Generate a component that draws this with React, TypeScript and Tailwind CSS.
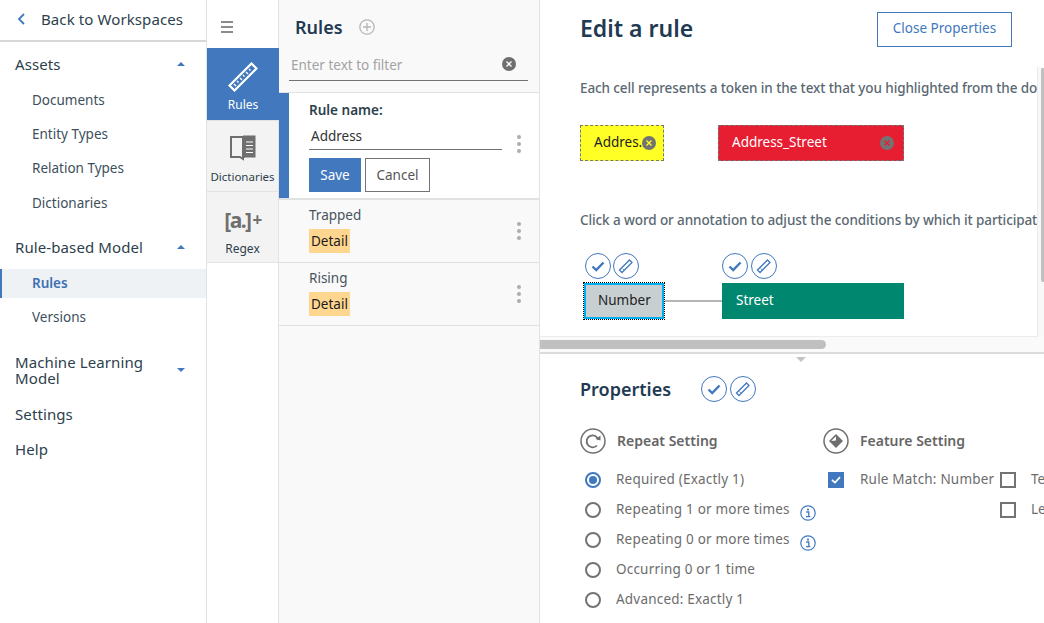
import React from "react";

const BLUE = "#4178be";

function Caret({ up = true }: { up?: boolean }) {
  return (
    <svg width="8" height="4" viewBox="0 0 8 4" className="shrink-0">
      <path d={up ? "M0 4 L4 0 L8 4 Z" : "M0 0 L4 4 L8 0 Z"} fill={BLUE} />
    </svg>
  );
}

function NavHead({ children, up = true }: { children: React.ReactNode; up?: boolean }) {
  return (
    <div className="flex items-center justify-between pl-[15px] pr-[21px] text-[15px] leading-[16px] text-[#2d3f4d] tracking-[0.1px]">
      <span>{children}</span>
      <Caret up={up} />
    </div>
  );
}

function NavItem({ children, active }: { children: React.ReactNode; active?: boolean }) {
  return (
    <div
      className={
        "h-[29px] flex items-center text-[13.5px] " +
        (active
          ? "bg-[#eff2f5] border-l-2 border-[#4178be] pl-[30px] text-[#3d70b2] font-semibold"
          : "pl-[32px] text-[#3d4f5c]")
      }
    >
      {children}
    </div>
  );
}

function CircleBtn({ kind }: { kind: "check" | "ruler" }) {
  return (
    <div className="w-[26px] h-[26px] rounded-full border border-[#4178be] bg-white flex items-center justify-center shrink-0">
      {kind === "check" ? (
        <svg width="14" height="11" viewBox="0 0 14 11" fill="none">
          <path d="M1.5 5.5 L5.2 9 L12.5 1.5" stroke={BLUE} strokeWidth="2.4" />
        </svg>
      ) : (
        <svg width="16" height="16" viewBox="0 0 16 16" fill="none">
          <path d="M1.5 12 L11.5 2 L14 4.5 L4 14.5 Z" stroke={BLUE} strokeWidth="1.3" />
          <path d="M4.5 10.5 L6 12" stroke={BLUE} strokeWidth="0.8" />
        </svg>
      )}
    </div>
  );
}

function CloseDot({ bg = "#6f6f6f", fg = "#fff", size = 14 }: { bg?: string; fg?: string; size?: number }) {
  return (
    <svg width={size} height={size} viewBox="0 0 14 14" className="shrink-0">
      <circle cx="7" cy="7" r="7" fill={bg} />
      <path d="M4.5 4.5 L9.5 9.5 M9.5 4.5 L4.5 9.5" stroke={fg} strokeWidth="1.3" />
    </svg>
  );
}

function Dots() {
  return (
    <div className="flex flex-col gap-[3px] shrink-0">
      <span className="w-[4px] h-[4px] rounded-full bg-[#a8adb1]" />
      <span className="w-[4px] h-[4px] rounded-full bg-[#a8adb1]" />
      <span className="w-[4px] h-[4px] rounded-full bg-[#a8adb1]" />
    </div>
  );
}

function RuleRow({ name }: { name: string }) {
  return (
    <div className="h-[63px] border-b border-[#dfe1e2] flex items-center justify-between pl-[30px] pr-[18px]">
      <div className="mb-[2px]">
        <div className="text-[13.5px] leading-[16px] text-[#47535c] mt-[-1px]">{name}</div>
        <div className="mt-[6px] w-[41px] h-[24px] bg-[#ffd68f] text-[13.5px] leading-[24px] text-[#1c1c1c] pl-[2px]">Detail</div>
      </div>
      <Dots />
    </div>
  );
}

function Radio({ label, on, info }: { label: string; on?: boolean; info?: boolean }) {
  return (
    <div className="h-[30px] flex items-center">
      <span
        className={
          "ml-[5px] w-[16px] h-[16px] rounded-full border-2 flex items-center justify-center shrink-0 " +
          (on ? "border-[#4178be]" : "border-[#737373]")
        }
      >
        {on && <span className="w-[8px] h-[8px] rounded-full bg-[#4178be]" />}
      </span>
      <span className="ml-[15px] mb-[2px] text-[13.5px] text-[#6c6c6c] tracking-[0.2px] whitespace-nowrap">{label}</span>
      {info && (
        <svg width="16" height="16" viewBox="0 0 16 16" className="ml-[10px] mt-[5px] shrink-0" fill="none">
          <circle cx="8" cy="8" r="7.2" stroke={BLUE} strokeWidth="1.2" />
          <circle cx="8" cy="4.6" r="1.1" fill={BLUE} />
          <path d="M6.2 7 H8.8 V11.4 M6 11.6 H10.4" stroke={BLUE} strokeWidth="1.3" />
        </svg>
      )}
    </div>
  );
}

function Box({ checked }: { checked?: boolean }) {
  return checked ? (
    <span className="w-[16px] h-[16px] bg-[#4178be] flex items-center justify-center shrink-0">
      <svg width="10" height="8" viewBox="0 0 10 8" fill="none">
        <path d="M1 4 L4 6.6 L9 1.2" stroke="#fff" strokeWidth="1.7" />
      </svg>
    </span>
  ) : (
    <span className="w-[16px] h-[16px] border-2 border-[#737373] bg-white shrink-0" />
  );
}

export default function App() {
  return (
    <div
      className="w-[1044px] h-[623px] overflow-hidden flex bg-white text-[#2d3f4d]"
      style={{ fontFamily: '"Noto Sans", "Open Sans", sans-serif' }}
    >
      {/* Left navigation */}
      <nav className="w-[207px] shrink-0 border-r border-[#dfe3e6] flex flex-col">
        <div className="h-[42px] border-b-2 border-[#d5d7d9] flex items-center pl-[17px] pb-[2px] shrink-0">
          <svg width="9" height="12" viewBox="0 0 9 12" fill="none">
            <path d="M7 1 L2 6 L7 11" stroke={BLUE} strokeWidth="1.8" />
          </svg>
          <span className="ml-[15px] text-[15px] text-[#2d3f4d] tracking-[0.1px]">Back to Workspaces</span>
        </div>
        <div className="pt-[14px]">
          <NavHead>Assets</NavHead>
          <div className="mt-[14px]">
            <div className="mb-[5px]"><NavItem>Documents</NavItem></div>
            <div className="mb-[5px]"><NavItem>Entity Types</NavItem></div>
            <div className="mb-[6px]"><NavItem>Relation Types</NavItem></div>
            <NavItem>Dictionaries</NavItem>
          </div>
          <div className="mt-[21px]"><NavHead>Rule-based Model</NavHead></div>
          <div className="mt-[14px]">
            <NavItem active>Rules</NavItem>
            <div className="mt-[5px]"><NavItem>Versions</NavItem></div>
          </div>
          <div className="mt-[22px]">
            <NavHead up={false}>
              <span className="block w-[150px]">Machine Learning Model</span>
            </NavHead>
          </div>
          <div className="mt-[20px] pl-[15px] text-[15px] leading-[16px] tracking-[0.1px]">Settings</div>
          <div className="mt-[19px] pl-[15px] text-[15px] leading-[16px] tracking-[0.1px]">Help</div>
        </div>
      </nav>

      {/* Icon rail */}
      <div className="w-[72px] shrink-0 flex flex-col border-r border-[#dfe3e6]">
        <div className="h-[48px] flex items-center pl-[14px] pt-[6px] shrink-0">
          <div className="flex flex-col gap-[3px]">
            <span className="w-[12px] h-[2px] bg-[#8c8c8c]" />
            <span className="w-[12px] h-[2px] bg-[#8c8c8c]" />
            <span className="w-[12px] h-[2px] bg-[#8c8c8c]" />
          </div>
        </div>
        <div className="h-[72px] bg-[#4178be] text-white flex flex-col items-center pt-[14px] w-[72px]">
          <svg width="30" height="30" viewBox="0 0 30 30" fill="none">
            <path d="M1.5 23.5 L23.5 1.5 L28.5 6.5 L6.5 28.5 Z" fill="#4178be" stroke="#fff" strokeWidth="2.2" />
            <path d="M6 22 l2 2 M9 19 l1.5 1.5 M12 16 l2 2 M15 13 l1.5 1.5 M18 10 l2 2 M21 7 l1.5 1.5" stroke="#fff" strokeWidth="1.4" />
          </svg>
          <span className="mt-[5px] text-[12px] leading-[16px]">Rules</span>
        </div>
        <div className="h-[72px] bg-[#f3f3f3] border-y border-[#e3e3e3] flex flex-col items-center pt-[13px] overflow-hidden">
          <svg width="27" height="27" viewBox="0 0 27 27" fill="none">
            <path d="M13 3 H2 V23 H11 L14 25 V3 Z" fill="#f3f3f3" stroke="#6f6f6f" strokeWidth="2" />
            <path d="M14 1.5 H26.5 V23.5 H16 L14 25 Z" fill="#6f6f6f" />
            <path d="M17 8 H24 M17 11.5 H24 M17 15 H24 M17 18.5 H24" stroke="#fff" strokeWidth="1.1" />
          </svg>
          <span className="mt-[8px] text-[11.5px] leading-[16px] text-[#2d3f4d] whitespace-nowrap">Dictionaries</span>
        </div>
        <div className="h-[71px] bg-[#f3f3f3] border-b border-[#e3e3e3] flex flex-col items-center pt-[15px] overflow-hidden">
          <div className="h-[26px] flex items-center text-[#6f6f6f] font-bold text-[21px] leading-[24px] tracking-[-1.5px]">
            [a.]<span className="text-[17px] ml-[2px]">+</span>
          </div>
          <span className="mt-[8px] text-[12px] leading-[16px] text-[#2d3f4d]">Regex</span>
        </div>
      </div>

      {/* Rules panel */}
      <div className="w-[261px] shrink-0 bg-[#f9f9f9] border-r border-[#dfe3e6] flex flex-col">
        <div className="h-[44px] pt-[11px] pl-[16px] flex items-center shrink-0">
          <span className="text-[18px] font-semibold text-[#1f3a52]">Rules</span>
          <svg width="16" height="16" viewBox="0 0 16 16" fill="none" className="ml-[16px] mt-[-2px]">
            <circle cx="8" cy="8" r="7.2" stroke="#b5b5b5" strokeWidth="1.3" />
            <path d="M8 4 V12 M4 8 H12" stroke="#b5b5b5" strokeWidth="1.3" />
          </svg>
        </div>
        <div className="ml-[10px] mr-[11px] h-[38px] border-b border-[#737373] flex items-center justify-between pl-[2px] pr-[12px] pt-[6px] mt-[-1px]">
          <span className="mt-[2px] text-[13.5px] text-[#a3a3a3]">Enter text to filter</span>
          <span className="mb-[1px]"><CloseDot /></span>
        </div>
        <div className="mt-[11px] h-[108px] border-t border-b-2 border-[#dfe1e2] bg-white flex">
          <div className="w-[10px] bg-[#4178be] shrink-0" />
          <div className="flex-1 pl-[20px] pr-[18px] pt-[9px] flex items-start justify-between">
            <div className="w-[193px]">
              <div className="text-[13.5px] leading-[16px] font-semibold text-[#2d3f4d]">Rule name:</div>
              <div className="mt-[2px] h-[30px] border-b border-[#737373] flex items-center pl-[2px] pt-[3px] text-[13.5px] text-[#333]">Address</div>
              <div className="mt-[8px] flex gap-[4px]">
                <div className="w-[52px] h-[34px] bg-[#4178be] text-white text-[13.5px] flex items-center justify-center">Save</div>
                <div className="w-[65px] h-[34px] border border-[#737373] bg-white text-[13.5px] text-[#555] flex items-center justify-center">Cancel</div>
              </div>
            </div>
            <div className="mt-[33px]"><Dots /></div>
          </div>
        </div>
        <RuleRow name="Trapped" />
        <RuleRow name="Rising" />
      </div>

      {/* Main */}
      <div className="flex-1 min-w-0 flex flex-col overflow-hidden">
        <div className="h-[354px] shrink-0 border-b-2 border-[#dcdcdc] flex flex-col">
          <div className="h-[67px] shrink-0 pl-[40px] pt-[12px] flex items-start">
            <h1 className="w-[297px] text-[23px] leading-[32px] font-semibold text-[#1f3a52]">Edit a rule</h1>
            <div className="w-[135px] h-[35px] border border-[#4178be] text-[#4178be] text-[13.5px] flex items-center justify-center pb-[2px]">Close Properties</div>
          </div>
          <div className="h-[270px] shrink-0 flex">
            <div className="flex-1 min-w-0 pl-[40px] pt-[11px] border-r border-b border-[#ececec] overflow-hidden">
              <div className="w-[600px]">
                <p className="text-[13.5px] leading-[20px] font-medium text-[#5a6872] tracking-[-0.1px] whitespace-nowrap">Each cell represents a token in the text that you highlighted from the document.</p>
                <div className="mt-[27px] flex">
                  <div className="w-[84px] h-[36px] bg-[#ffff26] border border-dashed border-[#777] flex items-center pl-[13px] pb-[2px] relative text-[13.5px] text-[#222] overflow-hidden">
                    Addres...
                    <span className="absolute left-[61px] top-[10px]"><CloseDot bg="#737373" fg="#ffff26" /></span>
                  </div>
                  <div className="ml-[54px] w-[186px] h-[36px] bg-[#e71d32] border border-dashed border-[#777] flex items-center justify-between pl-[13px] pr-[9px] text-[13.5px] text-white">
                    <span className="mb-[2px]">Address_Street</span>
                    <CloseDot bg="#737373" fg="#e71d32" />
                  </div>
                </div>
                <p className="mt-[49px] text-[13.5px] leading-[20px] font-medium text-[#5a6872] tracking-[-0.1px] whitespace-nowrap">Click a word or annotation to adjust the conditions by which it participates in the rule.</p>
                <div className="mt-[23px] flex">
                  <div className="w-[82px] ml-[3px]">
                    <div className="flex gap-[2px] ml-[2px]"><CircleBtn kind="check" /><CircleBtn kind="ruler" /></div>
                    <div className="mt-[3px] h-[38px] outline-dotted outline-1 outline-black outline-offset-[-1px] p-[1px]">
                      <div className="w-full h-full border-2 border-[#00aeef] bg-[#c7cfd1] flex items-center pl-[12px] pb-[2px] text-[13.5px] text-[#222]">Number</div>
                    </div>
                  </div>
                  <div className="w-[57px] h-[2px] bg-[#b5b5b5] mt-[47px]" />
                  <div className="w-[182px]">
                    <div className="flex gap-[3px]"><CircleBtn kind="check" /><CircleBtn kind="ruler" /></div>
                    <div className="mt-[4px] h-[36px] bg-[#00876f] text-white text-[13.5px] flex items-center pl-[14px] pb-[2px]">Street</div>
                  </div>
                </div>
              </div>
            </div>
            <div className="w-[6px] shrink-0 bg-[#f8f8f8] pl-[3px] pt-[1px]">
              <div className="w-[3px] h-[214px] rounded-l-[2px] bg-[#c0c0c0]" />
            </div>
          </div>
          <div className="flex-1 min-h-0 bg-[#fafafa] pt-[3px]">
            <div className="w-[286px] h-[9px] rounded-r-full bg-[#c0c0c0]" />
          </div>
        </div>

        <div className="flex-1 relative pl-[40px] overflow-hidden">
          <svg width="10" height="5" viewBox="0 0 10 5" className="absolute left-[256px] top-[3px]">
            <path d="M0 0 H10 L5 5 Z" fill="#c4c4c4" />
          </svg>
          <div className="flex items-center mt-[22px] h-[26px]">
            <h2 className="w-[121px] text-[18px] font-semibold text-[#1f3a52]">Properties</h2>
            <div className="flex gap-[3px]"><CircleBtn kind="check" /><CircleBtn kind="ruler" /></div>
          </div>
          <div className="mt-[26px] flex">
            <div className="w-[243px] shrink-0">
              <div className="flex items-center h-[26px]">
                <svg width="26" height="26" viewBox="0 0 26 26" fill="none">
                  <circle cx="13" cy="13" r="12" stroke="#6f6f6f" strokeWidth="1.5" />
                  <path d="M18.5 12 A6 6 0 1 0 17 17.5" stroke="#6f6f6f" strokeWidth="1.8" />
                  <path d="M15.5 11 L20.5 12.5 L20.5 7.5 Z" fill="#6f6f6f" />
                </svg>
                <span className="ml-[11px] mb-[2px] text-[14px] font-semibold text-[#666]">Repeat Setting</span>
              </div>
              <div className="mt-[11px]">
                <Radio label="Required (Exactly 1)" on />
                <Radio label="Repeating 1 or more times" info />
                <Radio label="Repeating 0 or more times" info />
                <Radio label="Occurring 0 or 1 time" />
                <Radio label="Advanced: Exactly 1" />
              </div>
            </div>
            <div className="shrink-0">
              <div className="flex items-center h-[26px]">
                <svg width="26" height="26" viewBox="0 0 26 26" fill="none">
                  <circle cx="13" cy="13" r="12" stroke="#6f6f6f" strokeWidth="1.5" />
                  <path d="M13 6 L20 13 L13 20 L6 13 Z" fill="#6f6f6f" />
                  <path d="M8.2 13 L13 8.2 L13 12.5 Z" fill="#fff" />
                </svg>
                <span className="ml-[11px] mb-[2px] text-[14px] font-semibold text-[#666]">Feature Setting</span>
              </div>
              <div className="mt-[11px] flex">
                <div className="h-[30px] flex items-center pl-[5px]">
                  <Box checked />
                  <span className="ml-[16px] mb-[2px] w-[140px] text-[13.5px] text-[#6c6c6c] tracking-[0.2px] whitespace-nowrap">Rule Match: Number</span>
                </div>
                <div className="flex flex-col">
                  <div className="h-[30px] flex items-center whitespace-nowrap"><Box /><span className="ml-[15px] mb-[2px] text-[13.5px] text-[#6c6c6c]">Text</span></div>
                  <div className="h-[30px] flex items-center whitespace-nowrap"><Box /><span className="ml-[15px] mb-[2px] text-[13.5px] text-[#6c6c6c]">Lemma</span></div>
                </div>
              </div>
            </div>
          </div>
        </div>
      </div>
    </div>
  );
}
